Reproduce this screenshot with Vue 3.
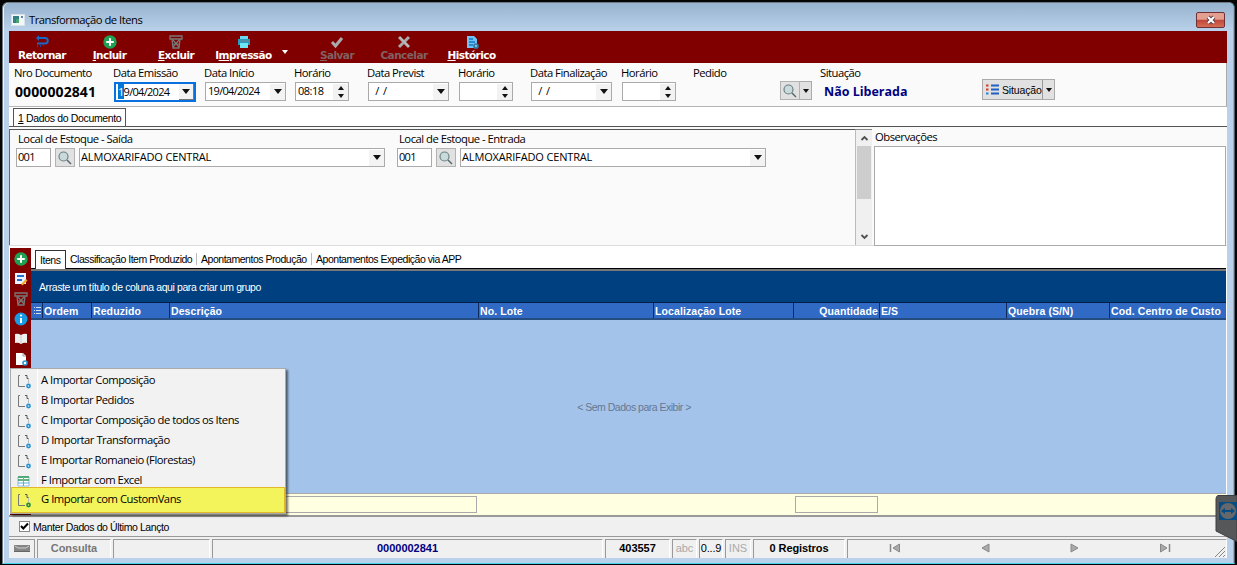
<template>
  <div class="desktop">
    <div class="window">
      <header class="titlebar">
        <svg class="app-icon" width="14" height="12" viewBox="0 0 14 12">
          <rect x=".5" y=".5" width="13" height="11" fill="#f4f7f8" stroke="#d9e2e8" />
          <path d="M2 2h6v7H2z" fill="#347f86" />
          <path d="M5 5h3v4H5z" fill="#4aa574" />
          <path d="M10 2h2v2h-2zM10 5h2" fill="#5985aa" />
        </svg>
        <span class="title">Transformação de Itens</span>
        <button class="close">
          <svg width="12" height="10" viewBox="0 0 12 10">
            <path d="M3 2l6 6M9 2L3 8" stroke="#553940" stroke-width="4" />
            <path d="M3 2l6 6M9 2L3 8" stroke="#fff" stroke-width="2.2" />
          </svg>
        </button>
      </header>

      <main class="client">
        <nav class="toolbar">
          <button
            v-for="tool in tools"
            :key="tool.text"
            :class="['tool', { disabled: tool.disabled }]"
            :style="{ width: tool.width + 'px' }"
          >
            <svg width="16" height="14" viewBox="0 0 16 14" v-html="icons[tool.icon]"></svg>
            <span class="tool-text">{{ tool.before }}<u>{{ tool.key }}</u>{{ tool.after }}</span>
            <i v-if="tool.menu" class="arrow light"></i>
          </button>
        </nav>

        <section class="fields">
          <div v-for="(field, index) in fields" :key="index" class="field">
            <label>{{ field.label }}</label>
            <strong v-if="field.type == 'number'" class="doc-number">{{ field.value }}</strong>
            <div v-else-if="field.type == 'date'" :class="['box', 'date', { active: field.active }]">
              <span class="value"><mark v-if="field.active">1</mark>{{ field.value }}</span>
              <span class="drop"><i class="arrow"></i></span>
            </div>
            <div v-else-if="field.type == 'time'" class="box time">
              <span class="value">{{ field.value }}</span>
              <span class="spin"><i class="arrow up"></i><i class="arrow tiny"></i></span>
            </div>
            <div v-else-if="field.type == 'lookup'" class="lookup">
              <span class="search"><svg width="16" height="16" viewBox="0 0 16 16" v-html="icons.search"></svg></span>
              <span class="lookup-drop"><i class="arrow tiny"></i></span>
            </div>
            <strong v-else-if="field.type == 'status'" class="status">{{ field.value }}</strong>
          </div>
          <button class="situation">
            <svg width="14" height="12" viewBox="0 0 14 12">
              <path d="M0 1.5h2.5M0 5.5h2.5" stroke="#d13e2b" stroke-width="2" />
              <path d="M0 9.5h2.5" stroke="#2686d4" stroke-width="2" />
              <path d="M5 1.5h8M5 5.5h8M5 9.5h8" stroke="#2160c4" stroke-width="2" />
            </svg>
            <span class="situation-text">Situação</span>
            <span class="situation-drop"><i class="arrow tiny"></i></span>
          </button>
        </section>

        <div class="doc-tabs"><span class="doc-tab"><u>1</u> Dados do Documento</span></div>

        <section class="document">
          <div class="stocks">
            <div v-for="stock in stocks" :key="stock" class="stock">
              <label>Local de Estoque - {{ stock }}</label>
              <div class="stock-row">
                <div class="box code">001</div>
                <span class="search"><svg width="16" height="16" viewBox="0 0 16 16" v-html="icons.search"></svg></span>
                <div class="box combo">
                  <span class="value">ALMOXARIFADO CENTRAL</span>
                  <span class="drop"><i class="arrow"></i></span>
                </div>
              </div>
            </div>
          </div>
          <div class="scrollbar">
            <svg width="15" height="16" viewBox="0 0 15 16"><path d="M4.5 10l3-3 3 3" fill="none" stroke="#505050" stroke-width="1.8" /></svg>
            <div class="thumb"></div>
            <svg class="scroll-down" width="15" height="16" viewBox="0 0 15 16"><path d="M4.5 6l3 3 3-3" fill="none" stroke="#505050" stroke-width="1.8" /></svg>
          </div>
          <div class="notes">
            <label>Observações</label>
            <div class="notes-box"></div>
          </div>
        </section>

        <section class="items">
          <aside class="side">
            <span v-for="name in sideIcons" :key="name">
              <svg width="16" height="14" viewBox="0 0 16 14" v-html="icons[name]"></svg>
            </span>
          </aside>
          <div class="grid-area">
            <div class="tabs">
              <span v-for="(tab, index) in tabs" :key="tab.text" :class="['tab', { selected: index === 0 }]" :style="{ width: tab.width + 'px' }">{{ tab.text }}</span>
            </div>
            <div class="group-band">Arraste um título de coluna aqui para criar um grupo</div>
            <div class="columns">
              <span class="column handle">
                <svg width="7" height="9" viewBox="0 0 7 9"><path d="M0 1.5h1M2 1.5h5M0 4.5h1M2 4.5h5M0 7.5h1M2 7.5h5" stroke="#d5e2f5" /></svg>
              </span>
              <span v-for="column in columns" :key="column.text" :class="['column', { right: column.right }]" :style="{ width: column.width + 'px' }">{{ column.text }}</span>
            </div>
            <div class="empty">&lt; Sem Dados para Exibir &gt;</div>
            <div class="summary">
              <span class="summary-box wide"></span>
              <span class="summary-box"></span>
            </div>
          </div>
        </section>

        <div class="keep">
          <span class="check"><svg width="9" height="9" viewBox="0 0 9 9"><path d="M1 4l2.3 2.5L8 1.5" fill="none" stroke="#000" stroke-width="2" /></svg></span>
          <span>Manter Dados do Último Lançto</span>
        </div>

        <footer class="statusbar">
          <span class="cell keyboard"><svg width="16" height="7" viewBox="0 0 16 7"><path d="M0 0h16v7H0z" fill="#858585" /><path d="M1 1l3 2h8l3-2" fill="none" stroke="#d0d0d0" /><path d="M0 6.5h16" stroke="#666" /></svg></span>
          <span class="cell mode">Consulta</span>
          <span class="cell blank"></span>
          <span class="cell number">0000002841</span>
          <span class="cell user">403557</span>
          <span class="cell abc">abc</span>
          <span class="cell digits">0...9</span>
          <span class="cell ins">INS</span>
          <span class="cell records">0 Registros</span>
          <span class="cell pager">
            <svg v-for="name in pages" :key="name" width="12" height="10" viewBox="0 0 12 10" v-html="icons[name]"></svg>
          </span>
          <svg class="grip" width="12" height="12" viewBox="0 0 12 12"><path d="M1 11L11 1M5 11l6-6M9 11l2-2" stroke="#888" /></svg>
        </footer>
      </main>
    </div>

    <ul class="menu">
      <li v-for="item in menu" :key="item" :class="{ chosen: item[0] === 'G' }">
        <svg width="14" height="15" viewBox="0 0 14 15" v-html="item[0] === 'F' ? icons.sheet : icons.page"></svg>
        <span>{{ item }}</span>
      </li>
    </ul>

    <svg class="remote" width="22" height="47" viewBox="0 0 22 47">
      <path d="M3 .5h19v46L1 36V4Q1 1 3 .5z" fill="#555759" stroke="#3c3e40" />
      <path d="M4 7h18v18H4z" fill="#064c83" />
      <circle cx="13" cy="16" r="8" fill="#64686c" />
      <path d="M6 16l4-3v2h6v-2l4 3-4 3v-2h-6v2z" fill="#064c83" />
    </svg>
  </div>
</template>

<script setup>
const icons = {
  back: '<path d="M4 3h7a2.7 2.7 0 0 1 0 5.5H3" fill="none" stroke="#1768c7" stroke-width="2"/><path d="M5 0L2 3l3 3z" fill="#1768c7"/><path d="M3.5 10v2M6.5 10v2M9.5 10v1" stroke="#174b9b"/>',
  add: '<circle cx="8" cy="7" r="6.7" fill="#20a052"/><path d="M8 3.2v7.6M4.2 7h7.6" stroke="#fff" stroke-width="2"/>',
  trash: '<path d="M2 1h12v3H2zM4 4l1 9h6l1-9" fill="none" stroke="#777" stroke-width="1.3"/><path d="M5 5l6 7M11 5l-6 7M5 9h6" stroke="#777" stroke-width="1.2"/>',
  print: '<path d="M4 1h8v3H4z" fill="#69d8ef"/><path d="M2 4h12v6H2z" fill="#269bc4"/><path d="M4 8h8v5H4z" fill="#6ee5f5"/><path d="M3 6h10" stroke="#78858b"/>',
  save: '<path d="M3 7l3.5 4L13 3" fill="none" stroke="#aaa" stroke-width="3"/>',
  cancel: '<path d="M3 2l10 10M13 2L3 12" stroke="#aaa" stroke-width="3"/><path d="M4 2l9 10" stroke="#ccc"/>',
  history: '<path d="M3 1h7l3 3v9H3z" fill="#72c3f5"/><path d="M5 4h4M5 7h6M5 10h4" stroke="#1478c1" stroke-width="1.4"/><circle cx="12" cy="11" r="2" fill="none" stroke="#35779d" stroke-width="1.7"/>',
  edit: '<path d="M2 1h11v11H2z" fill="#eef4ff"/><path d="M4 4h7M4 8h5" stroke="#236dce" stroke-width="2"/><path d="M8 12l5-5 1.5 1.5-5 5z" fill="#f5a72d"/>',
  info: '<circle cx="8" cy="7" r="6.5" fill="#189be2"/><path d="M8 6v5" stroke="#fff" stroke-width="2"/><circle cx="8" cy="3.5" r="1.1" fill="#fff"/>',
  book: '<path d="M2 2q3-1 6 1 3-2 6-1v9q-3-1-6 1-3-2-6-1z" fill="#eee"/><path d="M8 3v9" stroke="#ccc"/>',
  newPage: '<path d="M3 1h7l3 3v9H3z" fill="#fff"/><path d="M10 1v3h3" fill="none" stroke="#999"/><circle cx="12" cy="11" r="2" fill="#fff" stroke="#2c99d4" stroke-width="1.6"/>',
  search: '<circle cx="6.5" cy="6.5" r="4.5" fill="#c9dadd" stroke="#6c8084" stroke-width="1.2"/><path d="M10 10l4 4" stroke="#53676b" stroke-width="1.5"/>',
  page: '<path d="M3 1.5H1.5v11H8" fill="none" stroke="#777"/><path d="M8 1.5h2v3h1.5" fill="none" stroke="#555"/><path d="M11.5 5v4" stroke="#bbb"/><circle cx="11.5" cy="12" r="1.6" fill="none" stroke="currentColor" stroke-width="1.6"/>',
  sheet: '<path d="M1 3h11v9H1z" fill="#fff" stroke="#87bdde"/><path d="M1 3h11M1 6h11" stroke="#2e9955" stroke-width="1.3"/><path d="M1 9h11M6.5 3v9" stroke="#62abd4"/>',
  first: '<path d="M1.5 1v8" stroke="#888" stroke-width="1.5"/><path d="M10.5 1v8L4 5z" fill="#aaa" stroke="#888"/>',
  prior: '<path d="M10 1v8L3 5z" fill="#aaa" stroke="#888"/>',
  next: '<path d="M2 1v8l7-4z" fill="#aaa" stroke="#888"/>',
  last: '<path d="M1.5 1v8L8 5z" fill="#aaa" stroke="#888"/><path d="M10.5 1v8" stroke="#888" stroke-width="1.5"/>',
};

const tools = [
  { text: "Retornar", after: "Retornar", icon: "back", width: 66 },
  { text: "Incluir", key: "I", after: "ncluir", icon: "add", width: 69 },
  { text: "Excluir", key: "E", after: "xcluir", icon: "trash", width: 64 },
  { text: "Impressão", before: "I", key: "m", after: "pressão", icon: "print", width: 71, menu: true },
  { text: "Salvar", key: "S", after: "alvar", icon: "save", width: 116, disabled: true },
  { text: "Cancelar", after: "Cancelar", icon: "cancel", width: 18, disabled: true },
  { text: "Histórico", key: "H", after: "istórico", icon: "history", width: 117 },
];

const fields = [
  { label: "Nro Documento", type: "number", value: "0000002841" },
  { label: "Data Emissão", type: "date", value: "9/04/2024", active: true },
  { label: "Data Início", type: "date", value: "19/04/2024" },
  { label: "Horário", type: "time", value: "08:18" },
  { label: "Data Previst", type: "date", value: "\u00a0 /\u00a0 /" },
  { label: "Horário", type: "time", value: "" },
  { label: "Data Finalização", type: "date", value: "\u00a0 /\u00a0 /" },
  { label: "Horário", type: "time", value: "" },
  { label: "Pedido", type: "lookup" },
  { label: "Situação", type: "status", value: "Não Liberada" },
];

const stocks = ["Saída", "Entrada"];
const sideIcons = ["add", "edit", "trash", "info", "book", "newPage"];
const pages = ["first", "prior", "next", "last"];

const tabs = [
  { text: "Itens", width: 31 },
  { text: "Classificação Item Produzido", width: 131 },
  { text: "Apontamentos Produção", width: 115 },
  { text: "Apontamentos Expedição via APP", width: 156 },
];

const columns = [
  { text: "Ordem", width: 49 },
  { text: "Reduzido", width: 78 },
  { text: "Descrição", width: 309 },
  { text: "No. Lote", width: 175 },
  { text: "Localização Lote", width: 140 },
  { text: "Quantidade", width: 86, right: true },
  { text: "E/S", width: 127 },
  { text: "Quebra (S/N)", width: 103 },
  { text: "Cod. Centro de Custo", width: 117 },
];

const menu = [
  "A Importar Composição",
  "B Importar Pedidos",
  "C Importar Composição de todos os Itens",
  "D Importar Transformação",
  "E Importar Romaneio (Florestas)",
  "F Importar com Excel",
  "G Importar com CustomVans",
];
</script>

<style>
html,
body {
  overflow: hidden;
}
</style>

<style scoped>
* {
  box-sizing: border-box;
}

.desktop {
  position: relative;
  width: 1237px;
  height: 565px;
  padding: 2px 2px 1px;
  background: #050505;
  color: #000;
  font: 11.25px/14px "Open Sans", "Noto Sans", sans-serif;
  letter-spacing: -0.5px;
}

.window {
  width: 1233px;
  height: 562px;
  padding: 0 7px 5px 6px;
  border: 1px solid #707981;
  border-right-color: #525d63;
  border-bottom-color: #43d4ed;
  border-radius: 6px 6px 0 0;
  background: #b9d1ea;
  box-shadow: inset -1px 0 #3dd2eb, inset 1px 1px #eef4fa;
}

button {
  border: 0;
  padding: 0;
  font: inherit;
  color: inherit;
}

svg {
  display: block;
  flex: none;
}

.titlebar {
  display: flex;
  align-items: center;
  height: 28px;
  padding: 5px 0 0 7px;
  margin: 0 -6px 0 -5px;
  background: linear-gradient(#98b3cf, #b9d1ea);
  border-radius: 5px 5px 0 0;
}

.title {
  margin-left: 4px;
}

.close {
  display: flex;
  align-items: center;
  justify-content: center;
  width: 29px;
  height: 16px;
  margin: 0 8px 0 auto;
  border: 1px solid #6e3236;
  border-radius: 2px;
  background: linear-gradient(#e59f91 0 45%, #be4739 50%, #d76d54);
}

.client {
  width: 1218px;
  background: #fff;
}

.toolbar {
  display: flex;
  height: 32px;
  background: #800000;
  color: #fff;
}

.tool {
  position: relative;
  display: flex;
  flex-direction: column;
  align-items: center;
  padding-top: 4px;
  background: transparent;
  white-space: nowrap;
}

.tool-text {
  margin-top: -1px;
  font: bold 10.5px/14px "DejaVu Sans", sans-serif;
  letter-spacing: -0.55px;
}

.disabled .tool-text {
  color: #806060;
}

.arrow {
  width: 0;
  height: 0;
  border: 4.5px solid transparent;
  border-top: 5px solid #111;
  border-bottom: 0;
}

.arrow.tiny {
  border-width: 4px 3px 0;
}

.arrow.up {
  border: 3px solid transparent;
  border-top: 0;
  border-bottom: 4px solid #111;
}

.arrow.light {
  position: absolute;
  right: -9px;
  top: 19px;
  border-width: 4px 3.5px 0;
  border-top-color: #fff;
}

.fields {
  display: grid;
  grid-template-columns: 99px 91px 90px 73px 91px 72px 91px 72px 127px 162px 73px;
  height: 44px;
  padding: 3px 0 0 5px;
  border-right: 1px solid #aaa;
  border-bottom: 1px solid #b5b5b5;
  background: #fafafa;
}

.field label {
  display: block;
  white-space: nowrap;
}

.doc-number {
  display: block;
  margin: 5px 0 0 1px;
  font-size: 14px;
  letter-spacing: 0.1px;
}

.box {
  display: flex;
  align-items: center;
  height: 19px;
  border: 1px solid #aaa;
  background: #fff;
}

.field .box {
  margin: 2px 0 0 1px;
}

.date {
  width: 81px;
}

.value {
  padding: 0 0 1px 2px;
  font-size: 11px;
  letter-spacing: -0.7px;
  white-space: pre;
}

.field .box.active {
  width: 82px;
  height: 20px;
  border: 2px solid #0870df;
}

.active mark {
  color: #fff;
  background: #0078d7;
}

.drop {
  display: flex;
  align-items: center;
  justify-content: center;
  width: 15px;
  height: 16px;
  margin-left: auto;
  background: #f3f3f3;
}

.active .drop {
  border-right: 1px solid #777;
  border-bottom: 1px solid #777;
}

.time {
  width: 54px;
}

.time .value {
  letter-spacing: -0.5px;
}

.spin {
  display: flex;
  flex-direction: column;
  align-items: center;
  gap: 4px;
  width: 15px;
  padding: 2px 0;
  margin-left: auto;
  background: #f2f2f2;
}

.search {
  display: flex;
  align-items: center;
  justify-content: center;
  width: 20px;
  height: 19px;
  border: 1px solid #b2b2b2;
  background: #e1e1e1;
}

.lookup {
  display: flex;
  margin: 1px 0 0 87px;
}

.lookup-drop {
  display: flex;
  align-items: center;
  justify-content: center;
  width: 12px;
  border: 1px solid #aaa;
  border-left: 0;
  background: #e1e1e1;
}

.status {
  display: block;
  margin: 5px 0 0 4px;
  color: #000080;
  font-size: 12.5px;
  letter-spacing: 0;
}

.situation {
  display: flex;
  align-items: center;
  height: 21px;
  margin-top: 13px;
  padding-left: 3px;
  border: 1px solid #aaa;
  background: #e1e1e1;
  font: 10.5px/14px "Liberation Sans", sans-serif;
}

.situation-text {
  margin-left: 2px;
  letter-spacing: -0.15px;
}

.situation-drop {
  display: flex;
  align-items: center;
  justify-content: center;
  width: 12px;
  height: 19px;
  margin-left: auto;
  border-left: 1px solid #999;
}

.doc-tabs {
  height: 19px;
  padding: 1px 0 0 4px;
}

.doc-tab {
  display: block;
  width: 113px;
  height: 18px;
  padding: 2px 0 0 4px;
  border: 1px solid #555;
  border-bottom: 0;
  font: 10.5px/14px "Liberation Sans", sans-serif;
  letter-spacing: -0.35px;
  white-space: nowrap;
}

.document {
  display: flex;
  height: 120px;
  border-top: 1px solid #555;
  border-bottom: 1px solid #ddd;
  background: #fafafa;
}

.stocks {
  display: flex;
  width: 847px;
  margin-top: 2px;
  padding: 2px 0 0 6px;
  border-top: 1px solid #555;
  border-left: 1px solid #666;
  border-right: 1px solid #bbb;
}

.stock {
  width: 381px;
}

.stock label {
  display: block;
  padding-left: 2px;
}

.stock-row {
  display: flex;
  margin-top: 2px;
}

.code {
  width: 35px;
  margin-right: 4px;
  padding: 0 0 1px 1px;
  font-size: 11px;
  letter-spacing: -0.7px;
}

.combo {
  width: 306px;
  margin-left: 4px;
}

.combo .value {
  padding-left: 1px;
  letter-spacing: -0.15px;
}

.scrollbar {
  display: flex;
  flex-direction: column;
  width: 16px;
  margin-top: 2px;
  padding-left: 1px;
  border-top: 1px solid #888;
  background: #f0f0f0;
}

.thumb {
  width: 14px;
  height: 53px;
  background: #cdcdcd;
}

.scroll-down {
  margin-top: auto;
}

.notes {
  flex: 1;
  padding: 3px 1px 0 2px;
}

.notes label {
  display: block;
  padding-left: 1px;
}

.notes-box {
  height: 100px;
  margin-top: 2px;
  border: 1px solid #aaa;
  background: #fff;
}

.items {
  display: flex;
  height: 269px;
  margin-top: 2px;
  border-bottom: 2px solid #999;
}

.side {
  width: 21px;
  margin-left: 1px;
  padding-top: 4px;
  background: #800000;
}

.side span {
  display: flex;
  justify-content: center;
  height: 20px;
}

.grid-area {
  display: flex;
  flex-direction: column;
  width: 1195px;
  background: #a4c3ea;
  font: 10.5px/14px "Liberation Sans", sans-serif;
}

.tabs {
  display: flex;
  height: 21px;
  padding: 2px 0 0 4px;
  border-bottom: 1px solid #000;
  background: #fff;
  letter-spacing: -0.47px;
}

.tab {
  height: 18px;
  padding: 2px 0 0 4px;
  white-space: nowrap;
  background: linear-gradient(#bbb, #bbb) right 3px / 1px 12px no-repeat;
}

.tab:last-child {
  background: none;
}

.tab.selected {
  height: 19px;
  border: 1px solid #333;
  border-bottom: 0;
  background: #fff;
  position: relative;
}

.group-band {
  height: 33px;
  padding: 9px 0 0 8px;
  border-top: 2px solid #777;
  background: #004080;
  color: #fff;
  letter-spacing: -0.4px;
}

.columns {
  display: flex;
  height: 18px;
  overflow: hidden;
  border-top: 1px solid #051e43;
  border-bottom: 2px solid #254c7f;
  background: #316ac5;
}

.column {
  flex: none;
  padding: 1px 1px 0;
  border-right: 1px solid #102a5c;
  color: #fff;
  font-weight: bold;
  line-height: 14px;
  letter-spacing: 0.1px;
  white-space: nowrap;
}

.handle {
  width: 12px;
  padding: 3px 0 0 3px;
}

.right {
  text-align: right;
}

.empty {
  display: flex;
  flex: 1;
  align-items: center;
  justify-content: center;
  padding-left: 11px;
  color: #667891;
  letter-spacing: -0.5px;
}

.summary {
  display: flex;
  height: 22px;
  padding: 2px 0 2px 10px;
  border-top: 1px solid #aaa;
  background: #ffffe1;
}

.summary-box {
  width: 83px;
  margin-left: 318px;
  border: 1px solid #aaa;
}

.summary-box.wide {
  width: 436px;
  margin-left: 0;
}

.keep {
  display: flex;
  align-items: center;
  height: 19px;
  padding-left: 10px;
  background: #f0f0f0;
  font: 10.5px/14px "Liberation Sans", sans-serif;
  letter-spacing: -0.4px;
}

.check {
  margin-right: 3px;
  border: 1px solid #888;
  background: #fff;
}

.statusbar {
  position: relative;
  display: flex;
  gap: 2px;
  height: 22px;
  padding: 2px 0 0;
  border-top: 1px solid #999;
  background: #f0f0f0;
  font: 11px/17px "Liberation Sans", sans-serif;
  letter-spacing: 0;
}

.cell {
  display: flex;
  align-items: center;
  justify-content: center;
  height: 19px;
  padding-bottom: 2px;
  border-top: 1px solid #999;
  border-left: 1px solid #999;
  border-right: 1px solid #fff;
}

.keyboard {
  width: 26px;
  border-left: 0;
  border-right-color: #999;
}

.mode {
  width: 74px;
  color: #777;
  font-weight: bold;
  letter-spacing: -0.1px;
}

.blank {
  width: 97px;
}

.number {
  width: 391px;
  color: #000080;
  font-weight: bold;
}

.user {
  width: 65px;
  font-weight: bold;
}

.abc {
  width: 25px;
  color: #aaa;
}

.digits {
  width: 24px;
  letter-spacing: -0.2px;
}

.ins {
  width: 26px;
  color: #aaa;
}

.records {
  width: 92px;
  font-weight: bold;
  letter-spacing: -0.1px;
}

.pager {
  flex: 1;
  justify-content: flex-start;
  gap: 78px;
  padding-left: 41px;
}

.grip {
  position: absolute;
  right: 1px;
  bottom: 0;
}

.menu {
  position: absolute;
  top: 368px;
  left: 10px;
  width: 276px;
  height: 146px;
  margin: 0;
  padding: 2px 1px;
  list-style: none;
  border: 1px solid #aaa;
  background: linear-gradient(90deg, #f0f0f0 26px, #fff 26px 27px, #f2f2f2 27px);
  box-shadow: 2px 2px 2px #0008;
}

.menu li {
  display: flex;
  align-items: center;
  height: 20px;
  padding-left: 5px;
  color: #2593d1;
}

.menu span {
  margin: -2px 0 0 10px;
  color: #000;
  font-size: 11.25px;
  letter-spacing: -0.48px;
}

.menu .chosen {
  height: 26px;
  margin: -4px -1px 0;
  padding-left: 5px;
  border: 1px solid #e2b828;
  background: #f3f45c;
  color: #228a42;
}

.remote {
  position: absolute;
  top: 495px;
  right: 0;
}
</style>
